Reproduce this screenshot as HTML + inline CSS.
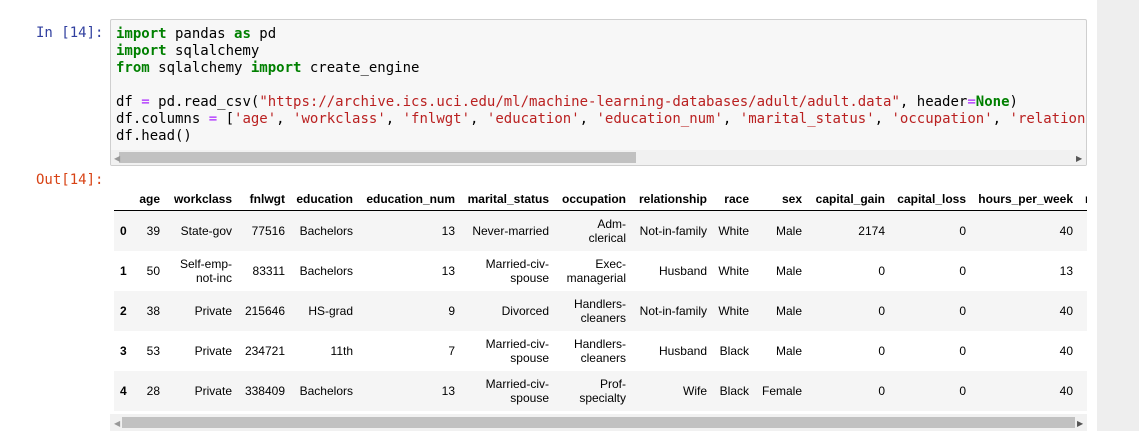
<!DOCTYPE html>
<html><head><style>
body{margin:0;width:1139px;height:431px;background:#fff;position:relative;overflow:hidden;font-family:"Liberation Sans",sans-serif}
.rs{position:absolute;left:1097px;top:0;width:42px;height:431px;background:#eee}
.pr{position:absolute;font-family:"DejaVu Sans Mono",monospace;font-size:14px;line-height:17px}
.code{position:absolute;left:110px;top:19px;width:975px;height:145px;border:1px solid #cfcfcf;background:#f7f7f7;border-radius:2px;overflow:hidden}
.code pre{margin:0;position:absolute;left:5px;top:6px;font-family:"DejaVu Sans Mono",monospace;font-size:14px;line-height:17px;color:#000;white-space:pre}
.k{color:#008000;font-weight:bold}.s{color:#ba2121}.o{color:#aa22ff}
.sb{position:absolute;background:#f1f1f1}
.th{position:absolute;background:#c1c1c1}
.tw{position:absolute;left:114px;top:187px;width:973px;height:225px;overflow:hidden}
table{border-collapse:collapse;font-size:12px;table-layout:fixed;width:980px}
td,th{text-align:right;padding:0 5px 0 0;line-height:14px;vertical-align:middle;color:#000}
thead th{height:23px;border-bottom:1px solid #000;font-weight:bold}
tbody tr{height:40px}
tbody tr:nth-child(odd){background:#f5f5f5}
tbody th{font-weight:bold;text-align:left;padding-left:6px}
</style></head><body>
<div class="rs"></div>
<div class="pr" style="left:36px;top:25px;color:#303f9f">In [14]:</div>
<div class="code"><pre><span class="k">import</span> pandas <span class="k">as</span> pd
<span class="k">import</span> sqlalchemy
<span class="k">from</span> sqlalchemy <span class="k">import</span> create_engine

df <span class="o">=</span> pd.read_csv(<span class="s">"https://archive.ics.uci.edu/ml/machine-learning-databases/adult/adult.data"</span>, header<span class="o">=</span><span class="k">None</span>)
df.columns <span class="o">=</span> [<span class="s">'age'</span>, <span class="s">'workclass'</span>, <span class="s">'fnlwgt'</span>, <span class="s">'education'</span>, <span class="s">'education_num'</span>, <span class="s">'marital_status'</span>, <span class="s">'occupation'</span>, <span class="s">'relationship'</span>]
df.head()</pre>
<div class="sb" style="left:0;top:130px;width:975px;height:15px"></div>
<div class="th" style="left:8px;top:132px;width:517px;height:11px"></div>
<div style="position:absolute;left:3px;top:134px;font-size:8px;color:#999">◀</div>
<div style="position:absolute;left:965px;top:134px;font-size:8px;color:#555">▶</div>
</div>
<div class="pr" style="left:36px;top:172px;color:#d84315">Out[14]:</div>
<div class="tw"><table>
<colgroup><col style="width:21px"><col style="width:30px"><col style="width:72px"><col style="width:53px"><col style="width:68px"><col style="width:102px"><col style="width:94px"><col style="width:77px"><col style="width:81px"><col style="width:42px"><col style="width:53px"><col style="width:83px"><col style="width:81px"><col style="width:107px"><col style="width:30px"></colgroup>
<thead><tr><th></th><th>age</th><th>workclass</th><th>fnlwgt</th><th>education</th><th>education_num</th><th>marital_status</th><th>occupation</th><th>relationship</th><th>race</th><th>sex</th><th>capital_gain</th><th>capital_loss</th><th>hours_per_week</th><th style="text-align:left;padding-left:7px">n</th></tr></thead>
<tbody>
<tr><th>0</th><td>39</td><td>State-gov</td><td>77516</td><td>Bachelors</td><td>13</td><td>Never-married</td><td>Adm-<br>clerical</td><td>Not-in-family</td><td>White</td><td>Male</td><td>2174</td><td>0</td><td>40</td><td></td></tr>
<tr><th>1</th><td>50</td><td>Self-emp-<br>not-inc</td><td>83311</td><td>Bachelors</td><td>13</td><td>Married-civ-<br>spouse</td><td>Exec-<br>managerial</td><td>Husband</td><td>White</td><td>Male</td><td>0</td><td>0</td><td>13</td><td></td></tr>
<tr><th>2</th><td>38</td><td>Private</td><td>215646</td><td>HS-grad</td><td>9</td><td>Divorced</td><td>Handlers-<br>cleaners</td><td>Not-in-family</td><td>White</td><td>Male</td><td>0</td><td>0</td><td>40</td><td></td></tr>
<tr><th>3</th><td>53</td><td>Private</td><td>234721</td><td>11th</td><td>7</td><td>Married-civ-<br>spouse</td><td>Handlers-<br>cleaners</td><td>Husband</td><td>Black</td><td>Male</td><td>0</td><td>0</td><td>40</td><td></td></tr>
<tr><th>4</th><td>28</td><td>Private</td><td>338409</td><td>Bachelors</td><td>13</td><td>Married-civ-<br>spouse</td><td>Prof-<br>specialty</td><td>Wife</td><td>Black</td><td>Female</td><td>0</td><td>0</td><td>40</td><td></td></tr>
</tbody></table></div>
<div class="sb" style="left:110px;top:414px;width:977px;height:17px"></div>
<div class="th" style="left:122px;top:417px;width:953px;height:11px"></div>
<div style="position:absolute;left:114px;top:419px;font-size:8px;color:#999">◀</div>
<div style="position:absolute;left:1077px;top:419px;font-size:8px;color:#555">▶</div>
</body></html>
